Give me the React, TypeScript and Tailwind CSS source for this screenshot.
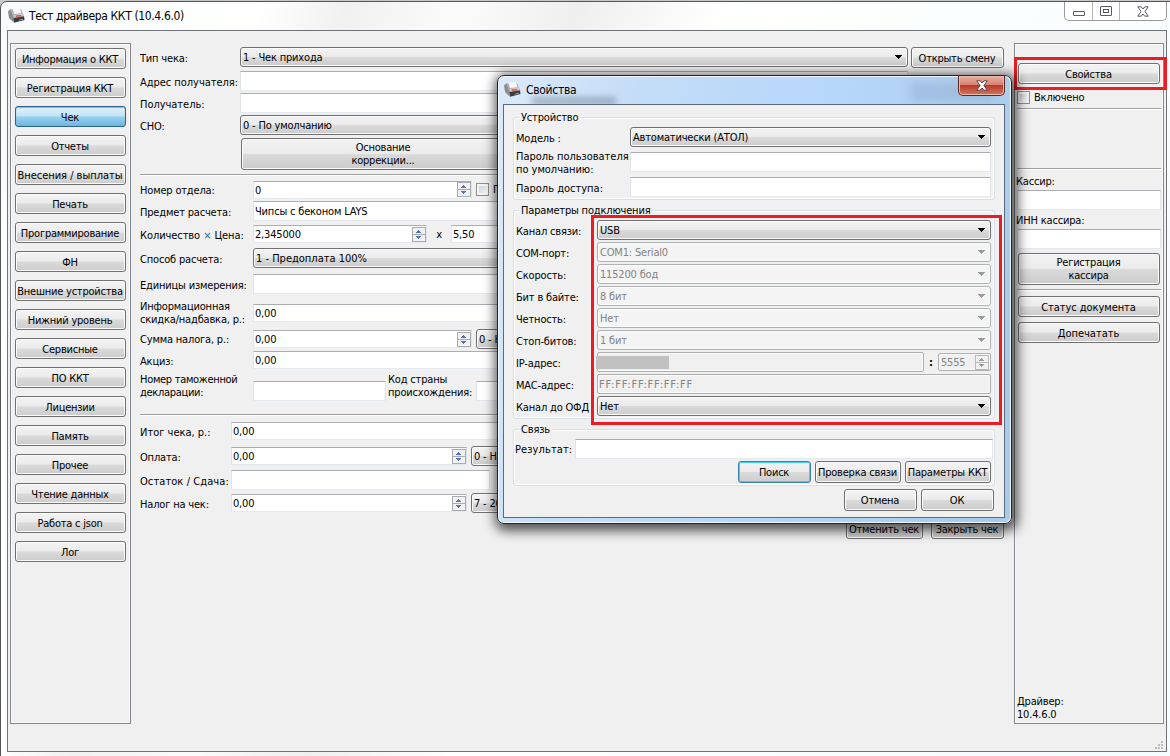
import React from "react";

const GRAD = "bg-[linear-gradient(to_bottom,#f3f3f3_0%,#ebebeb_48%,#dadada_52%,#cccccc_100%)]";

function Btn({ children, className = "" }: { children: React.ReactNode; className?: string }) {
  return (
    <button
      className={`flex shrink-0 items-center justify-center rounded-[3px] border border-[#707070] pt-[2px] pr-px text-center leading-[13px] tracking-[-0.22px] whitespace-pre shadow-[inset_0_0_0_1px_#fbfbfb] ${GRAD} ${className}`}
    >
      {children}
    </button>
  );
}

function Combo({ children, disabled = false, className = "" }: { children?: React.ReactNode; disabled?: boolean; className?: string }) {
  return (
    <div
      className={`flex h-5 shrink-0 items-center justify-between overflow-hidden rounded-[3px] border pr-[5px] pl-[2px] whitespace-pre ${
        disabled
          ? "border-[#adb2b5] bg-[#f4f4f4] text-[#838383] shadow-[inset_0_0_0_1px_#fcfcfc]"
          : `border-[#707070] shadow-[inset_0_0_0_1px_#fbfbfb] ${GRAD}`
      } ${className}`}
    >
      <span className="mt-[2px]">{children}</span>
      <svg width="7" height="4" className="shrink-0" shapeRendering="crispEdges">
        <path d="M0 0h7L4 4H3z" fill={disabled ? "#9a9a9a" : "#000"} />
      </svg>
    </div>
  );
}

function Field({ children, spin = false, className = "" }: { children?: React.ReactNode; spin?: boolean; className?: string }) {
  return (
    <div
      className={`flex shrink-0 items-center justify-between rounded-[1px] border border-[#e2e3ea] border-t-[#abadb3] border-b-[#e3e9ef] bg-white pl-px whitespace-pre ${className}`}
    >
      <span className="mt-[2px]">{children}</span>
      {spin && <Spin />}
    </div>
  );
}

function Spin({ disabled = false }: { disabled?: boolean }) {
  const line = disabled ? "#b8b8b8" : "#a9abb0";
  const arrow = disabled ? "#999" : "#5570b8";
  return (
    <svg width="14" height="15" className="shrink-0" shapeRendering="crispEdges">
      <path d="M.5 .5h13v14H.5z" fill="#f1f1f1" stroke={line} />
      <path d="M0 7.5h14" stroke={line} />
      <path d="M6 3h1v1h1v1h1v1H4V5h1V4h1zM4 9h5v1H8v1H7v1H6v-1H5v-1H4z" fill={arrow} />
    </svg>
  );
}

function Check() {
  return <span className="size-[13px] shrink-0 border border-[#8e8f8f] bg-gradient-to-br from-[#c4c9cf] to-white shadow-[inset_0_0_0_2px_#f4f4f4]" />;
}

function Row({ label, w, className, children }: { label: React.ReactNode; w: string; className: string; children?: React.ReactNode }) {
  return (
    <div className={`flex shrink-0 items-center ${className}`}>
      <span className={`mt-[2px] shrink-0 leading-[13px] whitespace-pre ${w}`}>{label}</span>
      {children}
    </div>
  );
}

function Rule({ className = "" }: { className?: string }) {
  return <div className={`h-[2px] shrink-0 border-t border-b border-t-[#a0a0a0] border-b-white ${className}`} />;
}

function PrinterIcon() {
  return (
    <svg width="17" height="16" viewBox="0 0 17 16" className="shrink-0">
      <path d="M0 3.500 2.500 1l3.500 8-.5 5.500L1 10z" fill="#8b8c8e" />
      <path d="M2.500 1.500 13 1l3 7-10.500 2z" fill="#aeafb1" />
      <path d="M4.500 .5 12 .3l1.500 5-7.500.7z" fill="#f7f7f7" />
      <path d="m5.500 7 9.500-1.200.7 2.700L6.500 10z" fill="#d9c9c8" />
      <path d="m7.500 7.600 5.500-.7.500 1.300-5.500.8z" fill="#d0524c" />
      <path d="M5.500 10 16 8.300l.5 3.700-10.500 2.700z" fill="#3a3b3d" />
      <path d="m11 11.500 4-.8v1l-4 .9z" fill="#9a9b9d" />
    </svg>
  );
}

function CloseX({ fill, stroke }: { fill: string; stroke: string }) {
  return (
    <svg width="12" height="11" viewBox="0 0 12 11">
      <path d="M.8.8h3.400L6 3 7.800.8h3.400L8 5.500l3.200 4.700H7.800L6 8l-1.800 2.200H.8L4 5.500z" fill={fill} stroke={stroke} />
    </svg>
  );
}

const NAV = [
  "Информация о ККТ", "Регистрация ККТ", "Чек", "Отчеты", "Внесения / выплаты", "Печать",
  "Программирование", "ФН", "Внешние устройства", "Нижний уровень", "Сервисные", "ПО ККТ",
  "Лицензии", "Память", "Прочее", "Чтение данных", "Работа с json", "Лог",
];

function Sidebar() {
  return (
    <nav className="flex h-[681px] w-[121px] shrink-0 flex-col gap-2 border border-[#828790] p-1 shadow-[inset_0_0_0_1px_#fafafa]">
      {NAV.map((n) =>
        n === "Чек" ? (
          <button
            key={n}
            className="flex h-[21px] shrink-0 items-center justify-center rounded-[3px] border border-[#2c628b] bg-[linear-gradient(to_bottom,#e2f2fb_0%,#c2e3f6_48%,#98d1ef_52%,#6cb6dd_100%)] pt-[2px] pr-px leading-[13px] shadow-[inset_0_1px_1px_#9eb0ba]"
          >
            {n}
          </button>
        ) : (
          <Btn key={n} className={n.includes("/") ? "h-[21px] tracking-[-0.02px]!" : "h-[21px]"}>{n}</Btn>
        ),
      )}
    </nav>
  );
}

function ReceiptForm() {
  return (
    <main className="ml-[9px] flex w-[864px] shrink-0 flex-col pt-1">
      <Row label="Тип чека:" w="w-[100px]" className="h-[21px]">
        <Combo className="mb-px w-[668px]">1 - Чек прихода</Combo>
        <Btn className="ml-[3px] h-[21px] w-[93px]">Открыть смену</Btn>
      </Row>
      <Row label="Адрес получателя:" w="w-[100px] tracking-[-0.04px]" className="mt-[3px] h-5">
        <Field className="h-5 w-[668px]" />
      </Row>
      <Row label="Получатель:" w="w-[100px] tracking-[-0.04px]" className="mt-[2px] h-5">
        <Field className="h-5 w-[668px]" />
      </Row>
      <Row label="СНО:" w="w-[100px]" className="mt-[2px] h-5">
        <Combo className="w-[668px]">0 - По умолчанию</Combo>
      </Row>
      <Btn className="mt-[3px] ml-[101px] h-8 w-[285px] pt-0!">{"Основание\nкоррекции..."}</Btn>
      <Rule className="mt-1" />
      <Row label="Номер отдела:" w="w-[113px]" className="mt-1 h-[19px]">
        <Field spin className="h-[18px] w-[219px]">0</Field>
        <span className="w-1" />
        <Check />
        <span className="ml-1">Позиция</span>
      </Row>
      <Row label="Предмет расчета:" w="w-[113px]" className="mt-[2px] h-5">
        <Field className="h-5 w-[560px]">Чипсы с беконом LAYS</Field>
      </Row>
      <Row
        label={<>Количество <span className="text-[#1d6a94]">×</span> Цена:</>}
        w="w-[113px] tracking-[-0.08px]"
        className="mt-1 h-[18px]"
      >
        <Field spin className="h-[18px] w-[174px]">2,345000</Field>
        <span className="mt-[2px] w-6 text-center">x</span>
        <Field className="h-[18px] w-[150px]">5,50</Field>
      </Row>
      <Row label="Способ расчета:" w="w-[113px]" className="mt-[5px] h-5">
        <Combo className="w-[560px] tracking-[0px]">1 - Предоплата 100%</Combo>
      </Row>
      <Row label="Единицы измерения:" w="w-[113px]" className="mt-[6px] h-5">
        <Field className="h-5 w-[560px]" />
      </Row>
      <Row label={"Информационная\nскидка/надбавка, р.:"} w="mt-0! w-[113px]" className="mt-[6px] h-[26px]">
        <Field className="h-[18px] w-[560px]">0,00</Field>
      </Row>
      <Row label="Сумма налога, р.:" w="mt-px! w-[113px]" className="mt-[3px] h-5">
        <Field spin className="h-[18px] w-[219px]">0,00</Field>
        <Combo className="ml-1 w-[200px]">0 - НДС</Combo>
      </Row>
      <Row label="Акциз:" w="w-[113px]" className="mt-[2px] h-[18px]">
        <Field className="h-[18px] w-[560px]">0,00</Field>
      </Row>
      <Row label={"Номер таможенной\nдекларации:"} w="mt-0! w-[113px] tracking-[-0.3px]" className="mt-[3px] h-7">
        <Field className="mt-[9px] h-5 w-[133px]" />
        <span className="ml-[2px] w-[88px] leading-[13px] whitespace-pre">{"Код страны\nпроисхождения:"}</span>
        <Field className="mt-[9px] h-5 w-[133px]" />
      </Row>
      <Rule className="mt-[14px]" />
      <Row label="Итог чека, р.:" w="w-[91px] tracking-[0px]" className="mt-[6px] h-[18px]">
        <Field className="h-[18px] w-[560px]">0,00</Field>
      </Row>
      <Row label="Оплата:" w="w-[91px]" className="mt-[6px] h-5">
        <Field spin className="h-[18px] w-[236px]">0,00</Field>
        <Combo className="ml-1 w-[200px]">0 - Наличными</Combo>
      </Row>
      <Row label="Остаток / Сдача:" w="w-[91px] tracking-[0.08px]" className="mt-[4px] h-5">
        <Field className="h-5 w-[259px]" />
      </Row>
      <Row label="Налог на чек:" w="w-[91px]" className="mt-[3px] h-5">
        <Field spin className="h-[18px] w-[236px]">0,00</Field>
        <Combo className="ml-1 w-[200px]">7 - 20%</Combo>
      </Row>
      <div className="mt-[5px] flex justify-end gap-2">
        <Btn className="h-[21px] w-[77px]">Отменить чек</Btn>
        <Btn className="h-[21px] w-[73px]">Закрыть чек</Btn>
      </div>
    </main>
  );
}

function DriverPanel() {
  return (
    <aside className="relative ml-[10px] flex h-[681px] w-[150px] shrink-0 flex-col border border-[#828790] px-[2px] pb-[2px] shadow-[inset_0_0_0_1px_#fafafa]">
      <Btn className="mx-px mt-[19px] h-[21px]">Свойства</Btn>
      <div className="mt-[6px] flex h-[14px] items-center gap-1">
        <Check />
        <span className="mt-[2px]">Включено</span>
      </div>
      <Rule className="mt-[4px]" />
      <Rule className="mt-[58px]" />
      <span className="mt-[5px] -ml-px h-[14px] leading-[14px]">Кассир:</span>
      <Field className="mt-px h-5" />
      <span className="mt-[4px] -ml-px h-[14px] leading-[14px]">ИНН кассира:</span>
      <Field className="mt-px h-5" />
      <Btn className="mx-px mt-1 h-8 pt-0!">{"Регистрация\nкассира"}</Btn>
      <Rule className="mt-1" />
      <Btn className="mx-px mt-[5px] h-[21px] tracking-[-0.05px]!">Статус документа</Btn>
      <Btn className="mx-px mt-[5px] h-[21px] tracking-[0px]!">Допечатать</Btn>
      <span className="mt-auto leading-[13px] whitespace-pre">{"Драйвер:\n10.4.6.0"}</span>
      <div className="absolute top-[13px] -left-px h-[33px] w-[153px] border-[3px] border-[#ed1c24]" />
    </aside>
  );
}

function Group({ title, className, children }: { title: string; className: string; children: React.ReactNode }) {
  return (
    <section className={`relative flex shrink-0 flex-col rounded-[3px] border border-[#d5dfe5] shadow-[inset_0_0_0_1px_#fff] ${className}`}>
      <span className="absolute -top-[7px] left-[5px] bg-[#f0f0f0] px-[2px] leading-[14px]">{title}</span>
      {children}
    </section>
  );
}

const PORTS: [string, string][] = [
  ["COM-порт:", "COM1: Serial0"],
  ["Скорость:", "115200 бод"],
  ["Бит в байте:", "8 бит"],
  ["Четность:", "Нет"],
  ["Стоп-битов:", "1 бит"],
];

function PropertiesDialog() {
  return (
    <div className="absolute top-[75px] left-[497px] flex h-[449px] w-[515px] flex-col rounded-[7px] border border-[#20262c] bg-[linear-gradient(100deg,#dceafa_0%,#c3dcf7_25%,#b7d7fb_55%,#a9c9ea_100%)] px-[5px] pb-[5px] shadow-[inset_0_0_0_1px_#eef6ff,2px_3px_12px_4px_rgba(0,0,0,0.65)]">
      <span className="absolute top-[21px] left-[34px] h-2 w-[84px] bg-[#4f6376]/40 blur-[3px]" />
      <span className="absolute top-[6px] left-[412px] h-[20px] w-[84px] bg-[#4f6376]/15 blur-[4px]" />
      <header className="relative flex h-[28px] shrink-0 items-start justify-between">
        <div className="flex items-center gap-[5px] pt-[6px] pl-px text-[12px] tracking-[-0.3px]">
          <PrinterIcon />
          <span>Свойства</span>
        </div>
        <button className="mr-px flex h-[20px] w-[47px] items-center justify-center rounded-b-[5px] border border-t-0 border-[#5a2822] bg-[linear-gradient(to_bottom,#e8b0a4_0%,#d88373_45%,#b93a26_50%,#d07760_100%)] shadow-[inset_0_0_0_1px_#eab8ad]">
          <CloseX fill="#fff" stroke="#55464a" />
        </button>
      </header>
      <div className="relative flex h-[414px] w-[502px] flex-col border border-[#5c6b7a] bg-[#f0f0f0] px-[9px]">
        <Group title="Устройство" className="mt-[12px] h-[83px] pl-[2px]">
          <Row label="Модель :" w="w-[114px]" className="mt-[9px] h-5">
            <Combo className="w-[361px]">Автоматически (АТОЛ)</Combo>
          </Row>
          <Row label={"Пароль пользователя\nпо умолчанию:"} w="w-[114px] tracking-[-0.03px]" className="mt-[2px] h-[26px]">
            <Field className="mb-[1px] h-5 w-[361px]" />
          </Row>
          <Row label="Пароль доступа:" w="w-[114px] tracking-[0px]" className="mt-[2px] h-5">
            <Field className="h-5 w-[361px]" />
          </Row>
        </Group>
        <Group title="Параметры подключения" className="mt-[10px] h-[209px] pl-[2px]">
          <Row label="Канал связи:" w="w-[81px]" className="mt-[9px] h-5">
            <Combo className="w-[394px]">USB</Combo>
          </Row>
          {PORTS.map(([k, v]) => (
            <Row key={k} label={k} w="w-[81px]" className="mt-[2px] h-5">
              <Combo disabled className="w-[394px]">{v}</Combo>
            </Row>
          ))}
          <Row label="IP-адрес:" w="w-[81px]" className="mt-[2px] h-5">
            <div className="flex h-5 w-[327px] items-center rounded-[2px] border border-[#afafaf] shadow-[inset_0_0_0_1px_#fafafa]">
              <span className="-ml-[2px] h-[13px] w-[73px] bg-[#c1c1c1]" />
            </div>
            <span className="mt-[2px] w-[14px] text-center font-bold">:</span>
            <div className="flex h-[18px] w-[53px] items-center justify-between rounded-[2px] border border-[#afafaf] pr-px pl-[2px] text-[#838383] shadow-[inset_0_0_0_1px_#fafafa]">
              <span className="mt-[2px]">5555</span>
              <Spin disabled />
            </div>
          </Row>
          <Row label="MAC-адрес:" w="w-[81px]" className="mt-[2px] h-5">
            <div className="flex h-5 w-[394px] items-center rounded-[2px] border border-[#afafaf] pt-[2px] pl-[1px] tracking-[0.78px] text-[#838383] shadow-[inset_0_0_0_1px_#fafafa]">FF:FF:FF:FF:FF:FF</div>
          </Row>
          <Row label="Канал до ОФД" w="w-[81px]" className="mt-[2px] h-5">
            <Combo className="w-[394px]">Нет</Combo>
          </Row>
          <div className="absolute top-[4px] left-[77px] h-[210px] w-[411px] border-[3px] border-[#ed1c24]" />
        </Group>
        <Group title="Связь" className="mt-[10px] h-[57px] pl-px">
          <Row label="Результат:" w="mt-px! w-[60px] tracking-[0.1px]" className="mt-[9px] h-5">
            <Field className="h-5 w-[418px]" />
          </Row>
          <div className="mt-[2px] flex justify-end gap-1 pr-[3px]">
            <Btn className="h-[22px] w-[73px] border-[#3c7fb1]! pt-px! shadow-[inset_0_0_0_1px_#45d0f5]!">Поиск</Btn>
            <Btn className="h-[22px] w-[86px] pt-px!">Проверка связи</Btn>
            <Btn className="h-[22px] w-[86px] pt-px!">Параметры ККТ</Btn>
          </div>
        </Group>
        <div className="mt-[3px] flex justify-end gap-1 pr-px">
          <Btn className="h-[22px] w-[73px] pt-px!">Отмена</Btn>
          <Btn className="h-[22px] w-[73px] pt-px!">ОК</Btn>
        </div>
      </div>
    </div>
  );
}

export default function App() {
  return (
    <div className="relative h-[756px] w-[1170px] overflow-hidden bg-[#c8c8c8] pt-px font-['DejaVu_Sans_Condensed','DejaVu_Sans',sans-serif] text-[11px] leading-[14px] tracking-[-0.18px] text-black [font-stretch:condensed]">
      <div className="flex h-[760px] w-[1175px] flex-col rounded-tl-[7px] border border-[#555] bg-[linear-gradient(110deg,#f8fbfb_0%,#fff_18%,#f1f1f1_24%,#fbfbfb_32%,#efefef_40%,#fff_50%,#f4fcfd_100%)] pl-[6px]">
        <header className="flex h-[28px] shrink-0 items-start justify-between pr-[6px]">
          <div className="flex items-center gap-[4px] pt-[6px] pl-px text-[12px] tracking-[-0.37px]">
            <PrinterIcon />
            <span>Тест драйвера ККТ (10.4.6.0)</span>
          </div>
          <div className="mr-px flex h-[19px] w-[103px] rounded-b-[5px] border border-t-0 border-[#9a9a9a] bg-white">
            <span className="flex w-[28px] items-center justify-center border-r border-[#b5b5b5]">
              <span className="mt-1 h-[5px] w-3 rounded-[1px] border border-[#555866]" />
            </span>
            <span className="flex w-[27px] items-center justify-center border-r border-[#b5b5b5]">
              <span className="flex h-[10px] w-3 items-center justify-center rounded-[1px] border border-[#555866]">
                <span className="h-1 w-[6px] border border-[#555866]" />
              </span>
            </span>
            <span className="flex flex-1 items-center justify-center">
              <CloseX fill="#fff" stroke="#555866" />
            </span>
          </div>
        </header>
        <div className="relative flex h-[722px] w-[1160px] shrink-0 border border-[#707478] bg-[#f0f0f0] pt-[12px] pl-[2px]">
          <Sidebar />
          <ReceiptForm />
          <DriverPanel />
          <svg width="8" height="8" className="absolute right-[3px] bottom-[2px]" shapeRendering="crispEdges">
            <path d="M6 0h2v2H6zM3 3h2v2H3zM6 3h2v2H6zM0 6h2v2H0zM3 6h2v2H3zM6 6h2v2H6z" fill="#bdbdbd" />
          </svg>
        </div>
      </div>
      <PropertiesDialog />
    </div>
  );
}
